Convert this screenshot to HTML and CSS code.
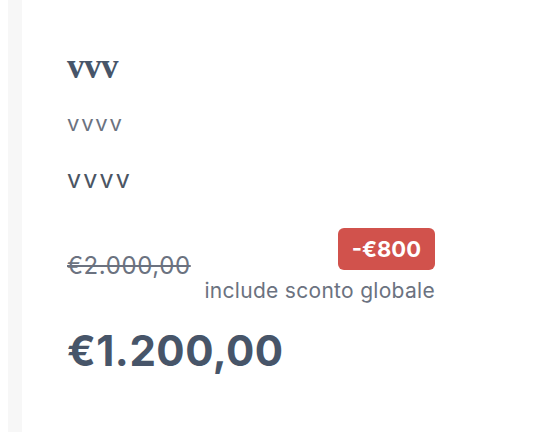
FILE: index.html
```html
<!DOCTYPE html>
<html>
<head>
<meta charset="utf-8">
<link rel="stylesheet" href="styles.css">
</head>
<body>
<div class="shell">
  <div class="card">
    <h1 class="title">vvv</h1>
    <p class="sub">vvvv</p>
    <p class="desc">vvvv</p>
    <div class="price-row">
      <span class="old-price">€2.000,00</span>
      <div class="discount">
        <span class="badge">-€800</span>
        <span class="note">include sconto globale</span>
      </div>
    </div>
    <div class="price">€1.200,00</div>
  </div>
</div>
</body>
</html>
```
FILE: styles.css
```css
html, body {
  margin: 0;
  padding: 0;
  background: #ffffff;
}
body {
  padding-left: 8px;
  font-family: Inter, "Noto Sans", sans-serif;
}
.shell {
  background: #f7f7f7;
  padding-left: 14px;
  min-height: 432px;
}
.card {
  background: #ffffff;
  min-height: 432px;
  padding: 47px 45px 0 45px;
  box-sizing: border-box;
}
.title {
  margin: 0;
  font-family: "Liberation Serif", serif;
  font-weight: 700;
  font-size: 35px;
  line-height: 40px;
  letter-spacing: -0.5px;
  color: #475569;
}
.sub {
  margin: 22px 0 0;
  font-size: 22px;
  line-height: 28px;
  letter-spacing: 1.8px;
  color: #6b7280;
}
.desc {
  margin: 27px 0 0;
  font-size: 25px;
  line-height: 30px;
  letter-spacing: 2.2px;
  color: #4b5563;
}
.price-row {
  margin-top: 34px;
  width: 368px;
  display: flex;
  justify-content: space-between;
  align-items: center;
}
.old-price {
  font-size: 24px;
  letter-spacing: 0.6px;
  color: #6b7280;
  text-decoration: line-through;
}
.discount {
  display: flex;
  flex-direction: column;
  align-items: flex-end;
  gap: 9px;
}
.badge {
  background: #d1524c;
  color: #ffffff;
  font-weight: 700;
  font-size: 22px;
  line-height: 42px;
  padding: 0 14px;
  border-radius: 6px;
}
.note {
  font-size: 21px;
  line-height: 24px;
  letter-spacing: 0.3px;
  color: #6b7280;
}
.price {
  margin-top: 24px;
  font-size: 42px;
  font-weight: 700;
  line-height: 48px;
  letter-spacing: 0.5px;
  color: #475569;
}
```
